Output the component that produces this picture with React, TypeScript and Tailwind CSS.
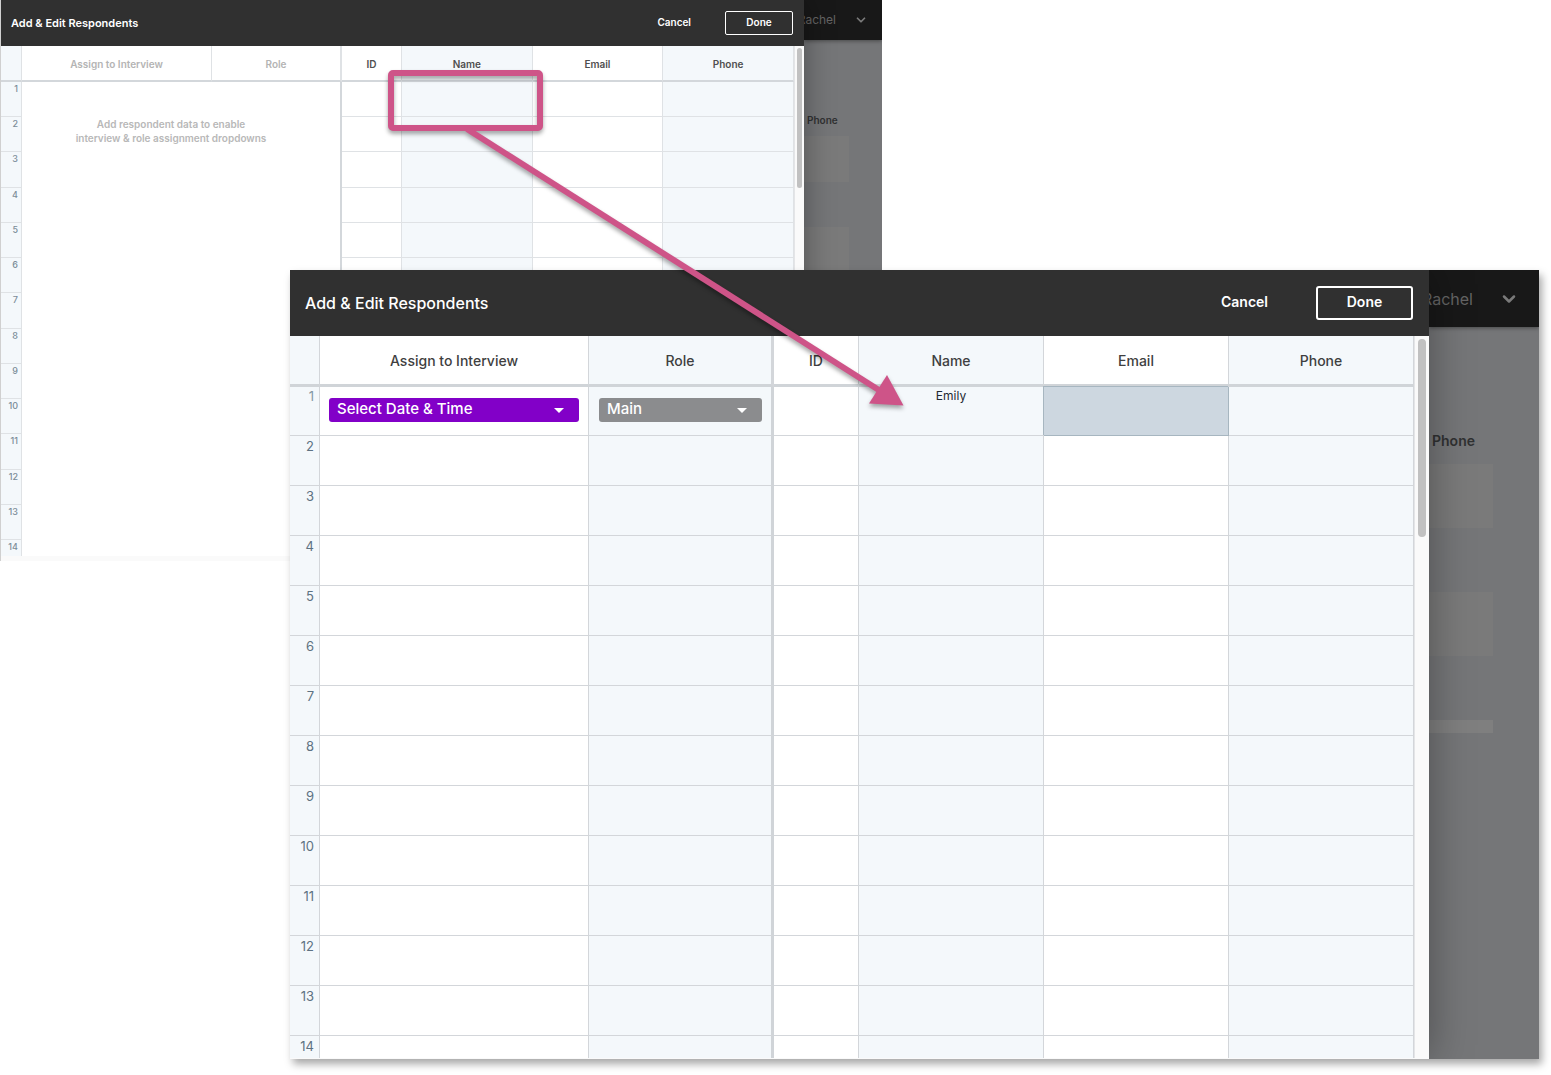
import clsx from "clsx"
import { ChevronDown } from "lucide-react"

const rows = Array.from({ length: 14 }, (_, i) => i + 1)

const line = "border-[#d3d6da]"
const tint = "bg-[#f4f8fb]"

function TitleBar({ small }: { small?: boolean }) {
  return (
    <header
      className={clsx(
        "flex items-center bg-[#303030] text-white",
        small ? "h-[46px] pl-[10px] pr-[11px]" : "h-[66px] pl-[15px] pr-4"
      )}
    >
      <h2 className={clsx("flex-1", small ? "text-[11px] font-semibold" : "text-base font-medium")}>
        Add &amp; Edit Respondents
      </h2>
      <button className={clsx("pb-[2px] font-semibold", small ? "mr-[34px] text-[10px]" : "mr-12 text-sm")}>Cancel</button>
      <button
        className={clsx(
          "border-white pb-[2px] font-semibold",
          small ? "h-6 w-[68px] rounded-xs border text-[10px]" : "h-[34px] w-[97px] rounded-[3px] border-2 text-sm"
        )}
      >
        Done
      </button>
    </header>
  )
}

function Scrollbar({ small }: { small?: boolean }) {
  return (
    <div className={clsx("shrink-0 border-l border-[#e4e5e7] bg-[#fafafa]", small ? "w-[10px] pl-[2px] pt-[2px]" : "w-[15px] pl-[3px] pt-[3px]")}>
      <div className={clsx("rounded-full bg-[#c1c1c1]", small ? "h-[140px] w-[5px]" : "h-[198px] w-2")} />
    </div>
  )
}

function Backdrop({ small }: { small?: boolean }) {
  return (
    <aside className={clsx("shrink-0 overflow-hidden bg-[#757678]", small ? "w-[78px]" : "w-[110px]")}>
      <div
        className={clsx(
          "flex items-center justify-end bg-[#181818] text-[#646464] shadow-[0_1px_4px_rgba(0,0,0,0.4)]",
          small ? "h-10 gap-[18px] pr-[14px] text-[12px]" : "h-[57px] gap-[26px] pr-5 text-base"
        )}
      >
        <span>Rachel</span>
        <ChevronDown className={clsx("shrink-0 text-[#7a7a7a]", small ? "size-[14px]" : "size-5")} strokeWidth={3} />
      </div>
      <div className={clsx("font-semibold text-[#303132]", small ? "pl-[3px] pt-[72px] text-[10px] leading-4" : "pl-[3px] pt-[104px] text-sm leading-5")}>
        Phone
      </div>
      <div className={clsx("flex flex-col", small ? "mr-[33px] mt-2 gap-[45px]" : "mr-[46px] mt-[13px] gap-16")}>
        <div className={clsx("bg-[#7a7a7a]", small ? "h-[46px]" : "h-16")} />
        <div className={clsx("bg-[#7a7a7a]", small ? "h-[46px]" : "h-16")} />
        <div className={clsx("bg-[#7f7f7f]", small ? "h-[9px]" : "h-[13px]")} />
      </div>
    </aside>
  )
}

function EmptySheet() {
  const th = "border-b-2 border-r border-b-[#d3d7db] border-r-[#dfe2e5] pt-[2px] text-[10px] font-semibold"
  const td = "border-b border-r border-[#dfe2e5]"
  return (
    <table className="w-full table-fixed border-separate border-spacing-0 bg-white text-[#4f4f4f]">
      <colgroup>
        <col className="w-[21px]" />
        <col className="w-[190px]" />
        <col className="w-[130px]" />
        <col className="w-[60px]" />
        <col />
        <col />
        <col />
      </colgroup>
      <thead>
        <tr className="h-9">
          <th className={clsx(th, tint)} aria-label="Row" />
          <th className={clsx(th, "text-[#b4b4b4]")}>Assign to Interview</th>
          <th className={clsx(th, "border-r-2 border-r-[#d3d7db] text-[#b4b4b4]")}>Role</th>
          <th className={th}>ID</th>
          <th className={clsx(th, tint)}>Name</th>
          <th className={th}>Email</th>
          <th className={clsx(th, tint)}>Phone</th>
        </tr>
      </thead>
      <tbody>
        {rows.map((n) => (
          <tr key={n} className={n === 14 ? "h-4" : n % 4 === 3 ? "h-9" : "h-[35px]"}>
            <td className={clsx(td, tint, "pr-[3px] text-right align-top text-[9px] leading-[14px] font-medium text-[#7b8d99]", n === 14 && "border-b-0")}>
              {n}
            </td>
            {n === 1 && (
              <td
                colSpan={2}
                rowSpan={14}
                className="border-r-2 border-[#d3d7db] pt-[35px] pr-5 text-center align-top text-[10px] leading-[14px] font-semibold text-[#b8b8b8]"
              >
                Add respondent data to enable
                <br />
                interview &amp; role assignment dropdowns
              </td>
            )}
            <td className={td} />
            <td className={clsx(td, tint)} />
            <td className={td} />
            <td className={clsx(td, tint)} />
          </tr>
        ))}
      </tbody>
    </table>
  )
}

function Dropdown({ label, value, color }: { label: string; value: string; color: string }) {
  return (
    <div className="relative">
      <select
        aria-label={label}
        className={clsx("block h-6 w-full appearance-none rounded-[3px] px-2 pb-px text-[15px] font-medium text-white", color)}
      >
        <option>{value}</option>
      </select>
      <svg className="pointer-events-none absolute top-[10px] right-[15px]" width="10" height="5" viewBox="0 0 10 5" fill="white">
        <path d="M0 0h10L5 5z" />
      </svg>
    </div>
  )
}

function FilledSheet() {
  const th = "border-b-3 border-r border-b-[#d0d4d8] border-r-[#d3d6da] pt-[2px] text-sm font-medium"
  return (
    <table className="w-full table-fixed border-separate border-spacing-0 bg-white text-[#3f3f3f]">
      <colgroup>
        <col className="w-[30px]" />
        <col className="w-[269px]" />
        <col className="w-[185px]" />
        <col className="w-[85px]" />
        <col />
        <col />
        <col />
      </colgroup>
      <thead>
        <tr className="h-[51px]">
          <th className={clsx(th, tint)} aria-label="Row" />
          <th className={th}>Assign to Interview</th>
          <th className={clsx(th, tint, "border-r-3 border-r-[#d0d4d8]")}>Role</th>
          <th className={th}>ID</th>
          <th className={clsx(th, tint)}>Name</th>
          <th className={th}>Email</th>
          <th className={clsx(th, tint)}>Phone</th>
        </tr>
      </thead>
      <tbody>
        {rows.map((n) => {
          const td = clsx("border-r align-top", line, n < 14 && "border-b")
          return (
            <tr key={n} className={n === 1 ? "h-[49px]" : n === 14 ? "h-[22px]" : "h-[50px]"}>
              <td
                className={clsx(
                  td,
                  tint,
                  "pr-[5px] text-right text-[13px]",
                  n === 1 ? "leading-[18px] text-[#8497a3]" : "leading-5 text-[#5d7282]"
                )}
              >
                {n}
              </td>
              <td className={clsx(td, n === 1 && "px-[9px] pt-[11px]")}>
                {n === 1 && <Dropdown label="Assign to Interview" value="Select Date & Time" color="bg-[#8200c8]" />}
              </td>
              <td className={clsx(td, tint, "border-r-3 border-r-[#d0d4d8]", n === 1 && "pt-[11px] pr-[9px] pl-[10px]")}>
                {n === 1 && <Dropdown label="Role" value="Main" color="bg-[#8b8c8e]" />}
              </td>
              <td className={td} />
              <td className={clsx(td, tint, "text-center text-xs leading-[18px] text-[#1f2a33]")}>{n === 1 && "Emily"}</td>
              <td
                className={
                  n === 1
                    ? "border-r border-b border-[#a7b6c0] bg-[#cdd7e0] shadow-[-1px_-1px_0_#a7b6c0]"
                    : td
                }
              />
              <td className={clsx(td, tint)} />
            </tr>
          )
        })}
      </tbody>
    </table>
  )
}

function Callout() {
  return (
    <svg
      className="pointer-events-none absolute top-0 left-0 drop-shadow-[0_3px_2px_rgba(0,0,0,0.35)]"
      width="920"
      height="420"
      viewBox="0 0 920 420"
      aria-hidden="true"
    >
      <rect x="391" y="73" width="149" height="55" rx="2" fill="none" stroke="#ce5488" strokeWidth="6" />
      <path d="M467 129L882 392" stroke="#ce5488" strokeWidth="6" />
      <path d="M887 375L903.5 405.5L869 403.5z" fill="#ce5488" />
    </svg>
  )
}

export default function App() {
  return (
    <main className="relative min-h-screen bg-white pt-[270px] pr-3 pb-4 pl-[290px] font-[Inter,'Liberation_Sans',sans-serif]">
      <section className="absolute top-0 left-0 isolate flex w-[882px] overflow-hidden">
        <div className="z-10 min-w-0 flex-1 border-l border-[#d0d0d0] bg-[#fafafa] shadow-[0_0_28px_rgba(0,0,0,0.35)]">
          <TitleBar small />
          <div className="flex pb-[5px]">
            <div className="min-w-0 flex-1">
              <EmptySheet />
            </div>
            <Scrollbar small />
          </div>
        </div>
        <Backdrop small />
      </section>

      <section className="relative isolate flex overflow-hidden shadow-[3px_5px_8px_rgba(0,0,0,0.35)]">
        <div className="z-10 min-w-0 flex-1 bg-[#fafafa] pb-px shadow-[0_0_40px_rgba(0,0,0,0.35)]">
          <TitleBar />
          <div className="flex">
            <div className="min-w-0 flex-1">
              <FilledSheet />
            </div>
            <Scrollbar />
          </div>
        </div>
        <Backdrop />
      </section>

      <Callout />
    </main>
  )
}
